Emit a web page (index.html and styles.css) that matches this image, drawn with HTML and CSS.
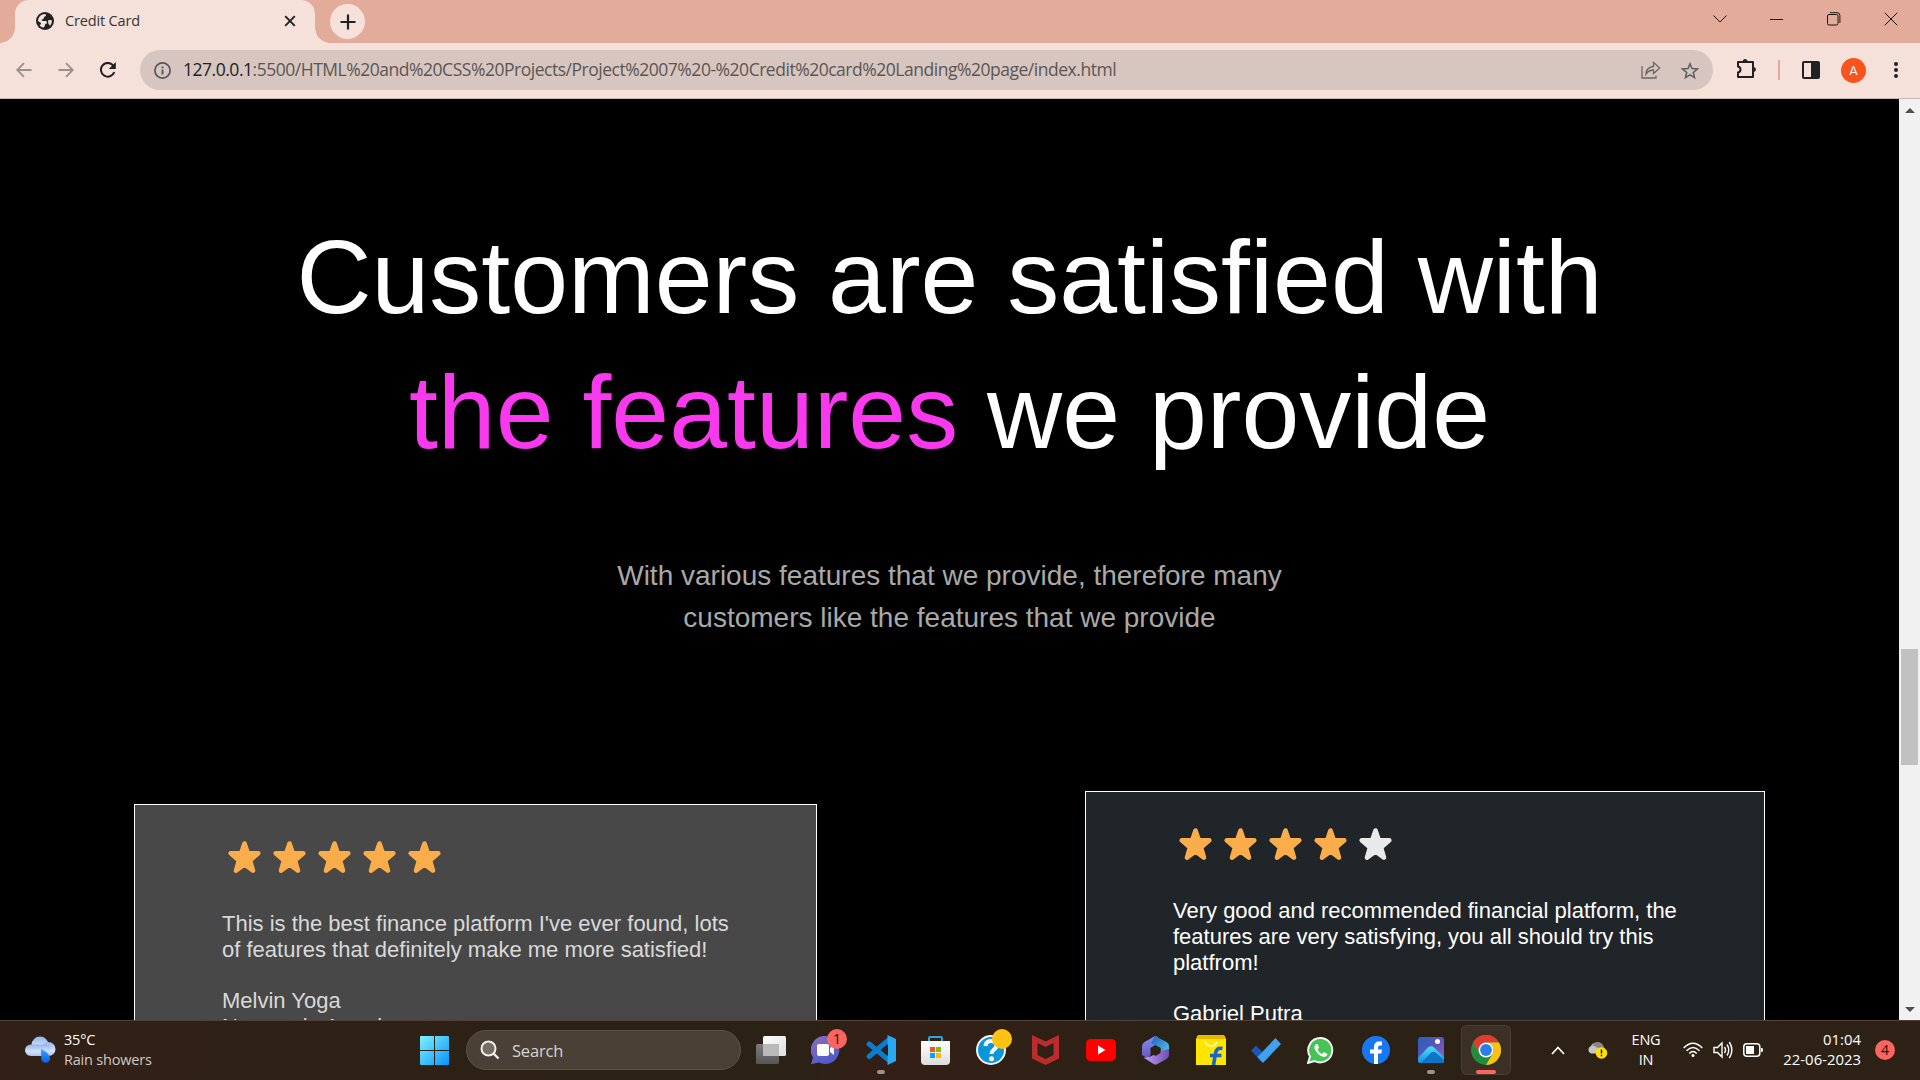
FILE: index.html
```html
<!DOCTYPE html>
<html lang="en">
<head>
<meta charset="utf-8">
<title>Credit Card</title>
<link rel="stylesheet" href="styles.css">
</head>
<body>
<svg class="defs" width="0" height="0">
  <defs>
    <linearGradient id="win" x1="0" y1="0" x2="1" y2="1"><stop offset="0" stop-color="#7df3ff"/><stop offset="1" stop-color="#0a93fb"/></linearGradient>
    <linearGradient id="cloud" x1="0" y1="0" x2="0" y2="1"><stop offset="0" stop-color="#8fb4ee"/><stop offset=".6" stop-color="#d5e2f8"/><stop offset="1" stop-color="#a9c3ee"/></linearGradient>
    <linearGradient id="drop" x1="0" y1="0" x2="0" y2="1"><stop offset="0" stop-color="#3ba0ff"/><stop offset="1" stop-color="#0562f0"/></linearGradient>
    <linearGradient id="paneBack" x1="0" y1="0" x2="0" y2="1"><stop offset="0" stop-color="#7c7c7c"/><stop offset="1" stop-color="#555"/></linearGradient>
    <linearGradient id="paneFront" x1="0" y1="0" x2="1" y2="1"><stop offset="0" stop-color="#fff"/><stop offset="1" stop-color="#dcdcdc"/></linearGradient>
    <linearGradient id="chat" x1="0" y1="0" x2=".6" y2="1"><stop offset="0" stop-color="#8b6fc0"/><stop offset="1" stop-color="#5059c9"/></linearGradient>
    <linearGradient id="store" x1="0" y1="0" x2="0" y2="1"><stop offset="0" stop-color="#fff"/><stop offset="1" stop-color="#dcdcdc"/></linearGradient>
    <linearGradient id="ofA" x1="0" y1="0" x2="0" y2="1"><stop offset="0" stop-color="#7b8ff0"/><stop offset="1" stop-color="#6a58b8"/></linearGradient>
    <linearGradient id="ofB" x1="0" y1="0" x2="1" y2="1"><stop offset="0" stop-color="#1f5fbf"/><stop offset="1" stop-color="#59d2f2"/></linearGradient>
    <linearGradient id="ofC" x1="0" y1="0" x2="1" y2="0"><stop offset="0" stop-color="#c79bf5"/><stop offset="1" stop-color="#6e50b0"/></linearGradient>
    <linearGradient id="photoBg" x1="0" y1="0" x2="1" y2="1"><stop offset="0" stop-color="#2361bd"/><stop offset=".5" stop-color="#5b56b8"/><stop offset="1" stop-color="#b05ac0"/></linearGradient>
    <linearGradient id="hill" x1="0" y1="0" x2="0" y2="1"><stop offset="0" stop-color="#48e0fa"/><stop offset="1" stop-color="#1490e0"/></linearGradient>
    <symbol id="star" viewBox="0 0 45 45"><path d="M22.500 8.500 25.800 18.300 36.300 18.300 28 25.500 31 35.600 22.500 29.500 14 35.600 17 25.500 8.700 18.300 19.200 18.300Z" fill="currentColor" stroke="currentColor" stroke-width="4.600" stroke-linejoin="round"/></symbol>
  </defs>
</svg>

<header class="tabstrip">
  <div class="tab">
    <svg class="favicon" width="18" height="18" viewBox="0 0 18 18"><circle cx="9" cy="9" r="9" fill="#202124"/><path d="M2 9A7 7 0 0 1 9.500 2L10 3.200Q9.800 4.500 8.300 4.700L7.500 6.800 5.500 8 6.500 9H10Q11.200 9.500 11 11.200L9.300 12 8.800 14 7.300 15.800Q4.500 15 3.500 13Q5.500 12.500 5 11ZM12 8.300 15.800 8Q16.300 11.500 14 14Q13.800 12.500 12.500 12.300Z" fill="#f5e1da"/></svg>
    <span class="tab-title">Credit Card</span>
    <svg width="12" height="12" viewBox="0 0 12 12" stroke="#202124" stroke-width="1.900"><path d="M1.200 1.200 10.800 10.800M10.800 1.200 1.200 10.800"/></svg>
  </div>
  <div class="newtab"><svg width="16" height="16" viewBox="0 0 16 16" stroke="#202124" stroke-width="2.200"><path d="M8 .5V15.500M.5 8H15.500"/></svg></div>
  <div class="winctl">
    <svg width="14" height="14" viewBox="0 0 14 14"><path d="M.5 3.500 7 10 13.500 3.500"/></svg>
    <svg width="14" height="14" viewBox="0 0 14 14"><path d="M0 7.500H13"/></svg>
    <svg width="14" height="14" viewBox="0 0 14 14"><rect x=".5" y="2.500" width="10.500" height="10.500" rx="1.500"/><path d="M3 .7H10Q12.900.7 12.900 3.500V11"/></svg>
    <svg width="14" height="14" viewBox="0 0 14 14"><path d="M.7.7 13.300 13.300M13.300.7.7 13.300"/></svg>
  </div>
</header>

<div class="toolbar">
  <div class="nav">
    <svg class="dim" width="16" height="16" viewBox="0 0 16 16"><path d="M15.500 8H1.500M8 1.200 1.200 8 8 14.800"/></svg>
    <svg class="dim" width="16" height="16" viewBox="0 0 16 16"><path d="M.5 8H14.500M8 1.200 14.800 8 8 14.800"/></svg>
    <svg width="16" height="16" viewBox="0 0 16 16"><path d="M14.300 10.200A6.900 6.900 0 1 1 13.300 3.600" stroke-width="2"/><path d="M15.800 0V7H8.800Z" fill="#202124" stroke="none"/></svg>
  </div>
  <div class="omnibox">
    <svg width="17" height="17" viewBox="0 0 17 17"><circle cx="8.500" cy="8.500" r="7.600" fill="none" stroke="#55565a" stroke-width="1.700"/><path d="M8.500 7.500V12.500M8.500 4.500V6.200" stroke="#55565a" stroke-width="1.900"/></svg>
    <span class="url"><b>127.0.0.1</b>:5500/HTML%20and%20CSS%20Projects/Project%2007%20-%20Credit%20card%20Landing%20page/index.html</span>
    <svg class="share" width="20" height="18" viewBox="0 0 20 18" fill="none" stroke="#6b6664" stroke-width="1.300"><path d="M1 5V17H15V14.500M5 13Q5.500 6 12.500 5.500V1.500L18.700 7 12.500 12.500V9Q8 9 5 13Z"/></svg>
    <svg width="18" height="17" viewBox="0 0 18 17" fill="none" stroke="#5f6064" stroke-width="1.600"><path d="M9 1.800 11 6.500 16.400 7 12.300 10.500 13.500 15.600 9 12.900 4.500 15.600 5.700 10.500 1.600 7 7 6.500Z"/></svg>
  </div>
  <svg class="puzzle" width="21" height="21" viewBox="0 0 21 21"><path d="M2 4H17V19H2V14.500Q4.500 14 4.500 11.500T2 8.500Z" fill="none" stroke="#202124" stroke-width="2" stroke-linejoin="round"/><path d="M6.700 3.500a2.500 2.500 0 0 1 5 0ZM17.500 9a2.500 2.500 0 0 1 0 5Z" fill="#202124"/></svg>
  <i class="divider"></i>
  <svg width="18" height="18" viewBox="0 0 18 18"><rect x="1" y="1" width="16" height="16" rx="1" fill="none" stroke="#202124" stroke-width="2"/><path d="M9 1H17V17H9Z" fill="#202124"/></svg>
  <span class="avatar">A</span>
  <svg class="kebab" width="6" height="16" viewBox="0 0 6 16" fill="#202124"><circle cx="3" cy="2" r="2"/><circle cx="3" cy="8" r="2"/><circle cx="3" cy="14" r="2"/></svg>
</div>

<div class="viewport">
  <main class="page">
    <h1>Customers are satisfied with<br><span>the features</span> we provide</h1>
    <p class="lead">With various features that we provide, therefore many<br>customers like the features that we provide</p>
    <section class="reviews">
      <article class="review">
        <div class="stars"><svg><use href="#star"/></svg><svg><use href="#star"/></svg><svg><use href="#star"/></svg><svg><use href="#star"/></svg><svg><use href="#star"/></svg></div>
        <p>This is the best finance platform I've ever found, lots<br>of features that definitely make me more satisfied!</p>
        <p>Melvin Yoga<br>New york, America</p>
      </article>
      <article class="review dark">
        <div class="stars"><svg><use href="#star"/></svg><svg><use href="#star"/></svg><svg><use href="#star"/></svg><svg><use href="#star"/></svg><svg class="off"><use href="#star"/></svg></div>
        <p>Very good and recommended financial platform, the<br>features are very satisfying, you all should try this<br>platfrom!</p>
        <p>Gabriel Putra</p>
      </article>
    </section>
  </main>
  <div class="scrollbar"><i class="up"></i><i class="thumb"></i><i class="down"></i></div>
</div>

<footer class="taskbar">
  <div class="weather">
    <svg width="31" height="28" viewBox="0 0 31 28"><g fill="url(#cloud)"><circle cx="15" cy="9" r="8.500"/><circle cx="23.500" cy="13" r="7"/><rect x="0" y="8.500" width="26" height="11.500" rx="5.800"/></g><path d="M16 13Q25 17 25 22.500A4.300 4.300 0 0 1 16.300 22.500Z" fill="url(#drop)"/></svg>
    <div class="forecast"><div class="temp">35°C</div><div class="cond">Rain showers</div></div>
  </div>
  <svg class="start" width="29" height="29" viewBox="0 0 29 29"><path d="M1 0H14V14H0V1Q0 0 1 0ZM15 0H28Q29 0 29 1V14H15ZM0 15H14V29H1Q0 29 0 28ZM15 15H29V28Q29 29 28 29H15Z" fill="url(#win)"/></svg>
  <div class="search"><svg width="20" height="20" viewBox="0 0 20 20"><circle cx="8.500" cy="8.500" r="7" fill="#756c62" stroke="#eee" stroke-width="2"/><path d="M13.500 13.500 18.500 18.500" stroke="#eee" stroke-width="2.400"/></svg><span>Search</span></div>
  <div class="apps">
    <div><svg width="30" height="28" viewBox="0 0 30 28"><rect y="8" width="23" height="20" rx="1.500" fill="url(#paneBack)"/><rect x="7" y="0" width="23" height="20" rx="1.500" fill="url(#paneFront)"/><path d="M7 8H23V20H8.500Q7 20 7 18.500Z" fill="#b9b9b9"/></svg></div>
    <div><svg width="29" height="28" viewBox="0 0 29 28"><path d="M14.500 0A14 14 0 1 1 8 26.500L1 28Q-.4 27.900.5 26.500L2 21.500A14 14 0 0 1 14.500 0Z" fill="url(#chat)"/><rect x="6" y="8" width="12" height="12" rx="2" fill="#fff"/><path d="M19 12 23 9V19L19 16Z" fill="#fff"/></svg><b class="count chatcount">1</b></div>
    <div><svg width="30" height="30" viewBox="0 0 30 30"><path d="M22 5.500 3.200 21.500M3.200 9 22 24.500" stroke="#0a7dcf" stroke-width="5" stroke-linecap="round"/><path d="M21.500 0 30 4V26L21.500 30Z" fill="#2aa8f2"/><path d="M15 15 22 9V21Z" fill="#2c2115"/></svg><i class="run"></i></div>
    <div><svg width="29" height="30" viewBox="0 0 29 30"><path d="M8 7V3Q8 2 9 2H20Q21 2 21 3V7" fill="none" stroke="#2ca8e0" stroke-width="2"/><path d="M0 6H29V26Q29 30 25 30H4Q0 30 0 26Z" fill="url(#store)"/><path d="M9 12h5v5H9Z" fill="#f35325"/><path d="M15 12h5v5H15Z" fill="#81bc06"/><path d="M9 18h5v5H9Z" fill="#05a6f0"/><path d="M15 18h5v5H15Z" fill="#ffba08"/></svg></div>
    <div><svg width="30" height="30" viewBox="0 0 30 30"><circle cx="15" cy="15" r="14" fill="#0897d8" stroke="#f4f4f4" stroke-width="2"/><path d="M9.500 11Q10 6 15 6T20.500 10.500Q20.500 13 17.500 15Q15.500 16.500 15.500 19" fill="none" stroke="#fff" stroke-width="4"/><circle cx="15.500" cy="23.800" r="2.500" fill="#fff"/></svg><b class="dot"></b></div>
    <div><svg width="27" height="30" viewBox="0 0 27 30"><path d="M0 0 13.500 6.500 27 0V23.500L13.500 30 0 23.500ZM5.500 8V20L13.500 24 21.500 20V8L13.500 12Z" fill="#bd2c2c" fill-rule="evenodd"/></svg></div>
    <div><svg width="30" height="22" viewBox="0 0 30 22"><rect width="30" height="22" rx="4.500" fill="#f00"/><path d="M12 6.500 19.500 11 12 15.500Z" fill="#fff"/></svg></div>
    <div><svg width="27" height="29" viewBox="0 0 27 29"><path d="M13 0 2.500 6Q0 7.500 0 10V19L6 22.500 8.500 19V12L16 7.500V1Z" fill="url(#ofA)"/><path d="M13 0 24.500 6Q27 7.500 27 10V18L21 21.500 18.500 18V12L9 7.500Z" fill="url(#ofB)"/><path d="M1.500 21.500Q7 22 11.500 19L18.500 15 27 13V19Q27 21.500 24.500 23L15.500 28Q13.500 29 11.500 28Z" fill="url(#ofC)"/><path d="M9 12 13.500 9.300 18.500 12V17L13.500 20 9 17Z" fill="#2c2115"/></svg></div>
    <div><svg width="30" height="30" viewBox="0 0 30 30"><path d="M2 0H28L30 4V30H0V4Z" fill="#ffe500"/><path d="M2 0H28L29 4H1Z" fill="#e8b500"/><path d="M9 6Q10 11 15 11T21 6" fill="none" stroke="#fff7b0" stroke-width="1.500"/><path d="M26.500 13.500Q20.500 12 19.500 18.500L17.500 30M14 20.500H25.500" fill="none" stroke="#1667c8" stroke-width="3.600"/></svg></div>
    <div><svg width="30" height="25" viewBox="0 0 30 25"><path d="M0 12.500 5 7.500 15 18 10.500 24Z" fill="#1a56b8"/><path d="M24.500 0 30 6 12 25 6.500 19Z" fill="#43a0ee"/></svg></div>
    <div><svg width="27" height="27" viewBox="0 0 27 27"><path d="M14 1A12.200 12.200 0 1 1 7.500 24L1 26 3 19.500A12.200 12.200 0 0 1 14 1Z" fill="#45c355" stroke="#f5f5f5" stroke-width="1.900"/><path d="M9.500 7Q7 8.500 7.500 11.500Q10 18 16.500 20Q20 20 20.500 17L16.800 15 15 17Q11.500 15.500 10.500 12.500L12 10.700 10.700 7Z" fill="#fff"/></svg></div>
    <div><svg width="28" height="28" viewBox="0 0 28 28"><circle cx="14" cy="14" r="14" fill="#1877f2"/><path d="M12 28V17.500H8V13.500H12V11Q12 5.500 17 5.500H20V9.500H18Q16 9.500 16 11.500V13.500H20L19.400 17.500H16V28Z" fill="#fff"/></svg></div>
    <div><svg width="26" height="26" viewBox="0 0 26 26"><rect width="26" height="26" rx="2.500" fill="url(#photoBg)"/><circle cx="19.500" cy="4.500" r="2.500" fill="#fff"/><path d="M0 21 10 10.500Q13 7.800 16 10.500L26 20V24Q26 26 24 26H2Q0 26 0 24Z" fill="url(#hill)"/><path d="M3 26 13.500 15.500Q15.500 14 17.500 15.500L26 23Q26 26 24 26Z" fill="#0f73c6"/></svg><i class="run"></i></div>
    <div class="active"><svg width="30" height="30" viewBox="0 0 30 30"><circle cx="15" cy="15" r="15" fill="#1e8e3e"/><path d="M2 7.500A15 15 0 0 1 28 7.500H15A7.500 7.500 0 0 0 8.500 18.700Z" fill="#e33b2e"/><path d="M28 7.500A15 15 0 0 1 15 30L21.500 18.700A7.500 7.500 0 0 0 15 7.500Z" fill="#fbc116"/><circle cx="15" cy="15" r="7.500" fill="#fff"/><circle cx="15" cy="15" r="5.900" fill="#2b7de9"/></svg><i class="run"></i></div>
  </div>
  <div class="tray">
    <svg width="14" height="9" viewBox="0 0 14 9" fill="none" stroke="#fff" stroke-width="1.700"><path d="M1 8 7 1.500 13 8"/></svg>
    <svg class="onedrive" width="21" height="18" viewBox="0 0 21 18"><path d="M4 12.500A4 4 0 0 1 4 5A6.500 6 0 0 1 15 3.500L17 7V12.500Z" fill="#c9c5c2"/><path d="M5 4A6.500 6 0 0 1 16.500 5V9L13 8Z" fill="#8b8784"/><circle cx="14.500" cy="12" r="5.800" fill="#ffe100"/><path d="M14.500 8.500V12.500M14.500 13.800V15.300" stroke="#222" stroke-width="1.500"/></svg>
    <div class="lang">ENG<br>IN</div>
    <svg class="wifi" width="20" height="16" viewBox="0 0 20 16" fill="none" stroke="#fff" stroke-width="1.500"><path d="M.7 6Q10-3.500 19.300 6M3.500 8.800Q10 2 16.500 8.800M6.300 11.500Q10 7.500 13.700 11.500"/><circle cx="10" cy="13.500" r="1.500" fill="#fff" stroke="none"/></svg>
    <svg class="vol" width="20" height="18" viewBox="0 0 20 18" fill="none" stroke="#fff" stroke-width="1.400"><path d="M1 6.500H4.500L9 2V16L4.500 11.500H1ZM11.500 6Q13.500 9 11.500 12M14 3.500Q17.500 9 14 14.500M16.300 1Q21.500 9 16.300 17"/></svg>
    <svg class="bat" width="20" height="14" viewBox="0 0 20 14"><rect x=".8" y=".8" width="16" height="12.400" rx="3" fill="none" stroke="#fff" stroke-width="1.500"/><path d="M3 3H11V11H3ZM18 5H19Q20 5 20 7T19 9H18Z" fill="#fff"/></svg>
    <div class="clock">01:04<br>22-06-2023</div>
    <b class="count">4</b>
  </div>
</footer>
</body>
</html>
```
FILE: styles.css
```css
* { box-sizing: border-box; margin: 0; padding: 0; }
html, body { width: 1920px; height: 1080px; overflow: hidden; }
body {
  display: grid;
  grid-template-rows: 43px 56px 921px 60px;
  background: #000;
  font-family: "Open Sans", "Noto Sans", sans-serif;
}
svg { display: block; flex: none; }
.defs { position: absolute; }

/* Tab strip */
.tabstrip { display: flex; align-items: center; background: #e3ab99; padding-left: 15px; }
.tab {
  position: relative; display: flex; align-items: center;
  width: 300px; height: 43px; padding: 0 19px 1px 21px;
  background: #f5e1da; border-radius: 14px 14px 0 0;
}
.tab::before, .tab::after { content: ""; position: absolute; bottom: 0; width: 15px; height: 15px; }
.tab::before { left: -15px; background: radial-gradient(circle at 0 0, #e3ab99 14.500px, #f5e1da 15px); }
.tab::after { right: -15px; background: radial-gradient(circle at 100% 0, #e3ab99 14.500px, #f5e1da 15px); }
.tab-title { flex: 1; padding: 0 0 1px 11px; font-size: 14.500px; letter-spacing: -.15px; color: #333436; }
.newtab { display: flex; align-items: center; justify-content: center; width: 35px; height: 35px; margin-left: 15px; border-radius: 50%; background: #f5e1da; }
.winctl { display: flex; align-items: center; margin-left: auto; gap: 43px; padding: 0 22px 6px 0; }
.winctl svg { fill: none; stroke: #1c1512; stroke-width: 1; }

/* Address bar */
.toolbar { display: flex; align-items: center; background: #f5e1da; border-bottom: 1px solid #c9bab7; padding: 0 21px 1px 16px; }
.nav { display: flex; gap: 26px; width: 124px; }
.nav svg { fill: none; stroke: #202124; stroke-width: 1.800; }
.nav .dim { stroke: #9b8f8c; }
.omnibox { display: flex; align-items: center; width: 1573px; height: 40px; border-radius: 20px; background: #d7c6bf; padding: 0 14px; }
.url { flex: 1; padding: 0 0 2px 12px; font-size: 17.500px; letter-spacing: -.475px; white-space: nowrap; color: #5b5654; }
.url b { font-weight: 400; color: #202124; }
.share { margin-right: 20px; }
.puzzle { margin: -3px 21px 0 23px; }
.divider { width: 2px; height: 20px; background: #e3ab99; margin-right: 22px; }
.avatar { width: 25px; height: 25px; margin: 0 27px 0 21px; border-radius: 50%; background: #f9531e; color: #fff; font: 13px/25px Roboto, sans-serif; text-align: center; }

/* Page */
.viewport { display: grid; grid-template-columns: 1899px 21px; overflow: hidden; }
.page { height: 921px; overflow: hidden; padding-top: 111px; color: #fff; font-family: "Liberation Sans", Arial, sans-serif; }
h1 { font-size: 104px; font-weight: 400; line-height: 135px; text-align: center; }
h1 span { color: #f939ee; }
.lead { margin-top: 75px; font-size: 28px; line-height: 42px; text-align: center; color: #a9a9a9; }
.reviews { display: flex; align-items: flex-start; justify-content: space-between; padding: 152px 134px 0; }
.review { width: 683px; height: 400px; margin-top: 13px; border: 1px solid #fff; padding: 30px 0 0 87px; background: #484848; color: #d9d9d9; font-size: 22px; line-height: 26px; }
.review.dark { width: 680px; margin-top: 0; background: #202529; color: #fff; }
.review p { margin-bottom: 25px; }
.stars { display: flex; margin-bottom: 31px; color: #fbad4b; }
.stars svg { width: 45px; height: 45px; }
.stars .off { color: #e9e9e9; }
.scrollbar { display: flex; flex-direction: column; align-items: center; background: #f1f1f1; padding: 9px 0 8px; }
.up, .down { border: 5px solid transparent; }
.up { border-top: 0; border-bottom-color: #505050; }
.down { border-bottom: 0; border-top-color: #505050; margin-top: auto; }
.thumb { width: 17px; height: 116px; margin-top: 536px; background: #c1c1c1; }

/* Taskbar */
.taskbar { display: flex; align-items: center; background: linear-gradient(90deg, #322016, #2d2115 25%, #2c2115 42%, #341f16 46%, #2c2115 60%, #2e2116); border-top: 1px solid #4e4138; padding: 0 0 1px 25px; color: #fff; }
.weather { display: flex; align-items: center; gap: 8px; width: 395px; font-size: 14.500px; line-height: 20px; letter-spacing: -.2px; }
.forecast { padding-bottom: 1px; }
.cond { color: #cfc8c3; }
.search { display: flex; align-items: center; gap: 12px; width: 275px; height: 40px; margin: 0 2px 0 17px; padding-left: 13px; border: 1px solid #5c5248; border-radius: 20px; background: #4a4036; color: #d8d3ce; font-size: 16.500px; letter-spacing: -.2px; }
.apps { display: flex; }
.apps > div { position: relative; display: flex; align-items: center; justify-content: center; width: 55px; height: 50px; }
.apps .active { width: 50px; margin-left: 3px; border-radius: 6px; background: #3c2f25; box-shadow: inset 0 0 0 1px #4a3d33; }
.run { position: absolute; bottom: 1px; width: 8px; height: 4px; border-radius: 2px; background: #9b948e; }
.active .run { width: 20px; background: #fb6560; }
.count { width: 20px; height: 20px; border-radius: 50%; background: #fb6560; color: #1c1110; font-size: 14px; font-weight: 400; line-height: 20px; text-align: center; }
.chatcount { position: absolute; left: 29px; top: 4px; }
.dot { position: absolute; left: 29px; top: 4px; width: 20px; height: 20px; border-radius: 50%; background: #ffc20e; }
.tray { display: flex; align-items: center; margin-left: auto; padding-right: 25px; font-size: 14.500px; line-height: 20px; letter-spacing: -.2px; }
.onedrive { margin-left: 22px; }
.lang { width: 40px; margin: 0 17px 0 18px; text-align: center; }
.vol { margin: 0 10px; }
.clock { width: 90px; margin: 0 14px 2px 8px; text-align: right; font-size: 14.900px; letter-spacing: 0; }
```
